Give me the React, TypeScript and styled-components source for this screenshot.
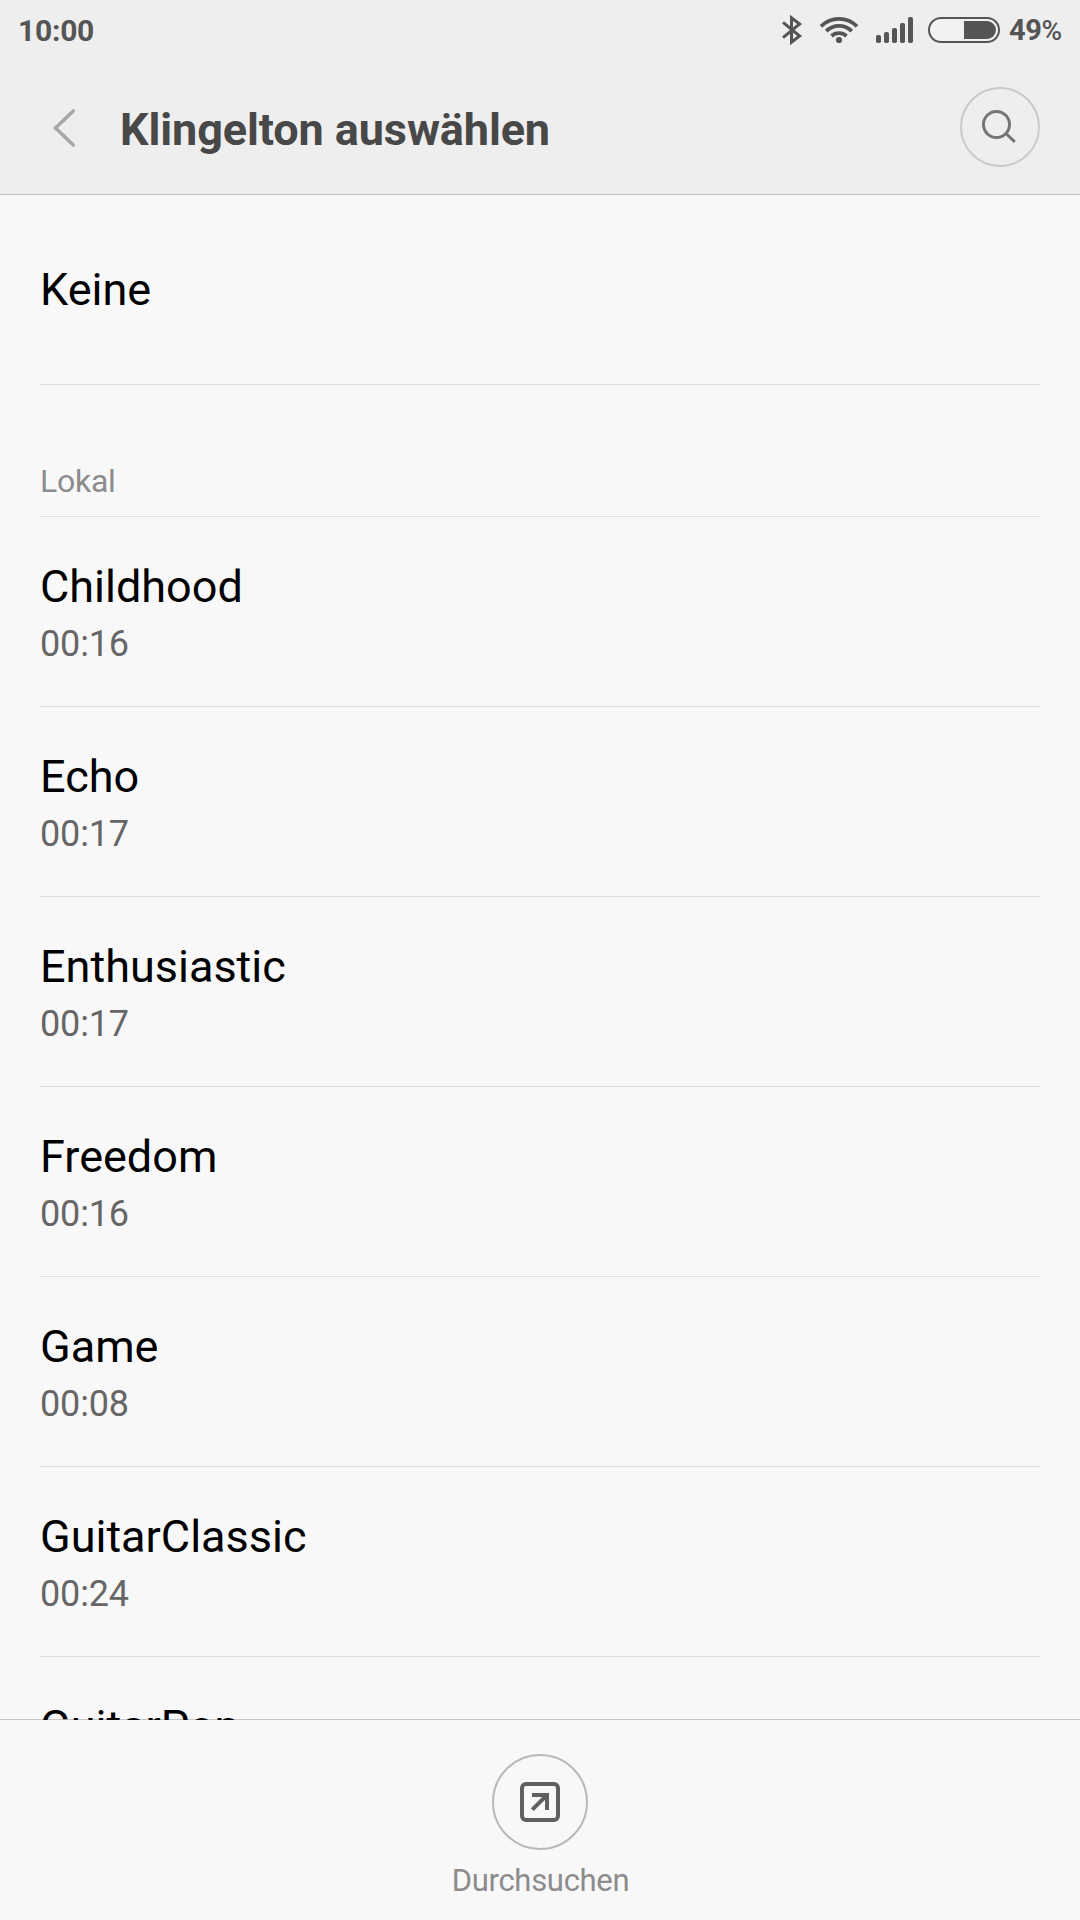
import React from "react";
import styled, { createGlobalStyle } from "styled-components";

const GlobalStyle = createGlobalStyle`
  *, *::before, *::after { box-sizing: border-box; }
  html, body { margin: 0; padding: 0; background: #f8f8f8; }
  body { font-family: Roboto, "Noto Sans", sans-serif; }
`;

const Screen = styled.div`
  width: 1080px;
  height: 1920px;
  display: flex;
  flex-direction: column;
  overflow: hidden;
  background: #f8f8f8;
`;

const Header = styled.header`
  flex: none;
  height: 195px;
  background: #eeeeee;
  border-bottom: 1px solid #bebebe;
`;

const StatusBar = styled.div`
  height: 60px;
  display: flex;
  align-items: center;
  justify-content: space-between;
  padding: 0 18px 0 18px;
  color: #555555;
`;

const Clock = styled.span`
  font-size: 30px;
  line-height: 36px;
  font-weight: 700;
  letter-spacing: -0.25px;
  padding-top: 1px;
`;

const StatusIcons = styled.div`
  display: flex;
  align-items: center;

  svg { display: block; }
`;

const Percent = styled.span`
  width: 53px;
  margin-left: 9px;
  padding-top: 1px;
  display: flex;
  align-items: baseline;
  font-size: 29px;
  line-height: 36px;
  font-weight: 700;
  letter-spacing: -0.4px;
  white-space: nowrap;
`;

const PercentSign = styled.span`
  font-size: 28px;
  font-weight: 500;
`;

const TitleBar = styled.div`
  height: 134px;
  display: flex;
  align-items: center;
  padding: 0 40px 0 50px;
`;

const BackButton = styled.button`
  width: 30px;
  height: 44px;
  padding: 0;
  border: 0;
  background: none;

  svg { display: block; }
`;

const Title = styled.h1`
  flex: 1;
  margin: 0 0 0 40px;
  padding-top: 5px;
  font-size: 45px;
  line-height: 54px;
  font-weight: 700;
  letter-spacing: -0.11px;
  color: #484848;
`;

const RoundButton = styled.button<{ $size: number; $border: string }>`
  width: ${(p) => p.$size}px;
  height: ${(p) => p.$size}px;
  display: flex;
  align-items: center;
  justify-content: center;
  padding: 0;
  border: 2px solid ${(p) => p.$border};
  border-radius: 50%;
  background: none;

  svg { display: block; flex: none; }
`;

const List = styled.main`
  flex: none;
  height: 1525px;
  overflow: hidden;
  padding: 0 40px;
`;

const Row = styled.div<{ $single?: boolean }>`
  height: 190px;
  padding-top: ${(p) => (p.$single ? 68 : 43)}px;
  border-bottom: 1px solid #dedede;
`;

const Name = styled.div`
  font-size: 45px;
  line-height: 54px;
  color: #000000;
`;

const Duration = styled.div`
  margin-top: 6px;
  font-size: 36px;
  line-height: 48px;
  letter-spacing: -0.15px;
  color: #666666;
`;

const SectionTitle = styled.div`
  height: 132px;
  display: flex;
  align-items: flex-end;
  padding-bottom: 16px;
  font-size: 32px;
  line-height: 38px;
  letter-spacing: -0.25px;
  color: #8c8c8c;
  border-bottom: 1px solid #dedede;
`;

const Footer = styled.footer`
  flex: none;
  z-index: 1;
  height: 201px;
  margin-top: -1px;
  padding-top: 34px;
  display: flex;
  flex-direction: column;
  align-items: center;
  border-top: 1px solid rgba(0, 0, 0, 0.2);
  background: #f8f8f8;
  background-clip: padding-box;
`;

const FooterLabel = styled.span`
  margin: 12px 0 0 1px;
  font-size: 31px;
  line-height: 38px;
  letter-spacing: -0.3px;
  color: #8c8c8c;
`;

const tones: { name: string; duration?: string }[] = [
  { name: "Childhood", duration: "00:16" },
  { name: "Echo", duration: "00:17" },
  { name: "Enthusiastic", duration: "00:17" },
  { name: "Freedom", duration: "00:16" },
  { name: "Game", duration: "00:08" },
  { name: "GuitarClassic", duration: "00:24" },
  { name: "GuitarPop" },
];

const ConnectivityIcons = () => (
  <svg width="220" height="60" viewBox="780 0 220 60" fill="none" stroke="#555555">
    <path d="M783 22.4 L799.6 36 L791.5 42.2 V17.8 L799.6 24 L783 37.6" strokeWidth="3" />
    <g strokeWidth="3.8">
      <path d="M821 26.3 A25.5 25.5 0 0 1 857 26.3" />
      <path d="M826.2 31.2 A18 18 0 0 1 851.8 31.2" />
      <path d="M831.5 36 A11 11 0 0 1 846.5 36" />
    </g>
    <circle cx="839" cy="40" r="3.1" fill="#555555" stroke="none" />
    <g fill="#555555" stroke="none">
      <rect x="876" y="35" width="5" height="8" rx="1.8" />
      <rect x="884" y="32" width="5" height="11" rx="1.8" />
      <rect x="892" y="28" width="5" height="15" rx="1.8" />
      <rect x="900" y="23" width="5" height="20" rx="1.8" />
      <rect x="908" y="17" width="5" height="26" rx="1.8" />
    </g>
    <rect x="929" y="18" width="70" height="24" rx="12" strokeWidth="2" fill="#f2f2f2" />
    <path d="M964 21 H987 A9 9 0 0 1 987 39 H964 Z" fill="#555555" stroke="none" />
  </svg>
);

const BackIcon = () => (
  <svg width="30" height="44" viewBox="50 105 30 44" fill="none">
    <path d="M73.3 111 L55.5 128 L73.3 145" stroke="#a8a8a8" strokeWidth="3.6" strokeLinecap="round" />
  </svg>
);

const SearchIcon = () => (
  <svg width="40" height="40" viewBox="980 107 40 40" fill="none" stroke="#757575" strokeWidth="3">
    <circle cx="996.5" cy="124.5" r="13" />
    <path d="M1006.5 134 L1014.8 141.8" />
  </svg>
);

const BrowseIcon = () => (
  <svg width="40" height="40" viewBox="0 0 40 40" fill="none" stroke="#606060" strokeWidth="4">
    <rect x="2" y="2" width="36" height="36" rx="4" />
    <path d="M12 13 H27 V28" />
    <path d="M12.3 27.7 L26.5 13.5" />
  </svg>
);

export default function App() {
  return (
    <>
      <GlobalStyle />
      <Screen>
        <Header>
          <StatusBar>
            <Clock>10:00</Clock>
            <StatusIcons>
              <ConnectivityIcons />
              <Percent>
                49<PercentSign>%</PercentSign>
              </Percent>
            </StatusIcons>
          </StatusBar>
          <TitleBar>
            <BackButton aria-label="Zurück">
              <BackIcon />
            </BackButton>
            <Title>Klingelton auswählen</Title>
            <RoundButton $size={80} $border="#cacaca" aria-label="Suchen">
              <SearchIcon />
            </RoundButton>
          </TitleBar>
        </Header>
        <List>
          <Row $single>
            <Name>Keine</Name>
          </Row>
          <SectionTitle>Lokal</SectionTitle>
          {tones.map((tone) => (
            <Row key={tone.name}>
              <Name>{tone.name}</Name>
              {tone.duration && <Duration>{tone.duration}</Duration>}
            </Row>
          ))}
        </List>
        <Footer>
          <RoundButton $size={96} $border="#b8b8b8" aria-label="Durchsuchen">
            <BrowseIcon />
          </RoundButton>
          <FooterLabel>Durchsuchen</FooterLabel>
        </Footer>
      </Screen>
    </>
  );
}
